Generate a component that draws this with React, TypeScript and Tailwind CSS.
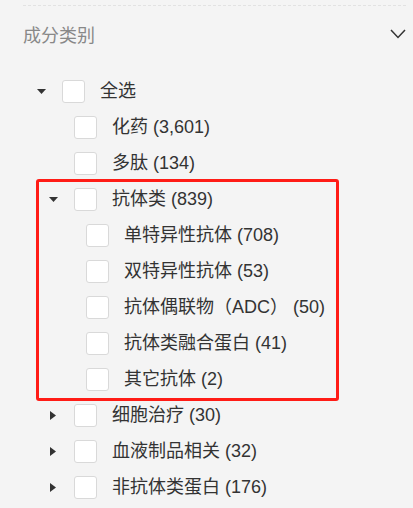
type Node = {
  label: string;
  level: number;
  caret?: 'down' | 'right';
};

const before: Node[] = [
  { label: '全选', level: 0, caret: 'down' },
  { label: '化药 (3,601)', level: 1 },
  { label: '多肽 (134)', level: 1 },
];

const antibody: Node[] = [
  { label: '抗体类 (839)', level: 1, caret: 'down' },
  { label: '单特异性抗体 (708)', level: 2 },
  { label: '双特异性抗体 (53)', level: 2 },
  { label: '抗体偶联物（ADC） (50)', level: 2 },
  { label: '抗体类融合蛋白 (41)', level: 2 },
  { label: '其它抗体 (2)', level: 2 },
];

const after: Node[] = [
  { label: '细胞治疗 (30)', level: 1, caret: 'right' },
  { label: '血液制品相关 (32)', level: 1, caret: 'right' },
  { label: '非抗体类蛋白 (176)', level: 1, caret: 'right' },
];

const pad = ['pl-[33px]', 'pl-[45px]', 'pl-[57px]'];

function Caret({ dir }: { dir?: 'down' | 'right' }) {
  return (
    <span className="w-[16px] h-[16px] flex items-center justify-center shrink-0">
      {dir === 'down' && (
        <svg width="9" height="5" viewBox="0 0 9 5">
          <polygon points="0,0 9,0 4.5,5" fill="#333" />
        </svg>
      )}
      {dir === 'right' && (
        <svg width="6" height="9" viewBox="0 0 6 9">
          <polygon points="0,0 6,4.5 0,9" fill="#333" />
        </svg>
      )}
    </span>
  );
}

function Row({ node }: { node: Node }) {
  return (
    <div className={`h-[36px] flex items-center ${pad[node.level]}`}>
      <Caret dir={node.caret} />
      <span className="ml-[13px] w-[23px] h-[23px] shrink-0 bg-white border border-[#d9d9d9] rounded-[3px]" />
      <span className="ml-[15px] text-[18px] leading-[24px] text-[#333] whitespace-nowrap">
        {node.label}
      </span>
    </div>
  );
}

export default function App() {
  return (
    <div
      className="w-[413px] h-[508px] bg-[#f4f4f4] overflow-hidden"
      style={{ fontFamily: '"Liberation Sans", Arial, "Noto Sans CJK SC", sans-serif' }}
    >
      <div className="pt-[5px] pl-[23px] pr-[7px]">
        <div className="border-t border-dashed border-[#e2e2e2] h-[68px] flex items-start justify-between">
          <span className="mt-[18px] text-[18px] leading-[24px] text-[#888]">成分类别</span>
          <svg className="mt-[23px]" width="16" height="10" viewBox="0 0 16 10">
            <polyline points="1,1 8,8.5 15,1" fill="none" stroke="#333" strokeWidth="1.5" />
          </svg>
        </div>
      </div>

      {before.map((n) => (
        <Row key={n.label} node={n} />
      ))}

      <div className="relative">
        {antibody.map((n) => (
          <Row key={n.label} node={n} />
        ))}
        <div className="absolute left-[36px] top-[-2px] w-[303px] h-[222px] border-[3px] border-[#ff1c16] rounded-[3px] pointer-events-none" />
      </div>

      {after.map((n) => (
        <Row key={n.label} node={n} />
      ))}
    </div>
  );
}
